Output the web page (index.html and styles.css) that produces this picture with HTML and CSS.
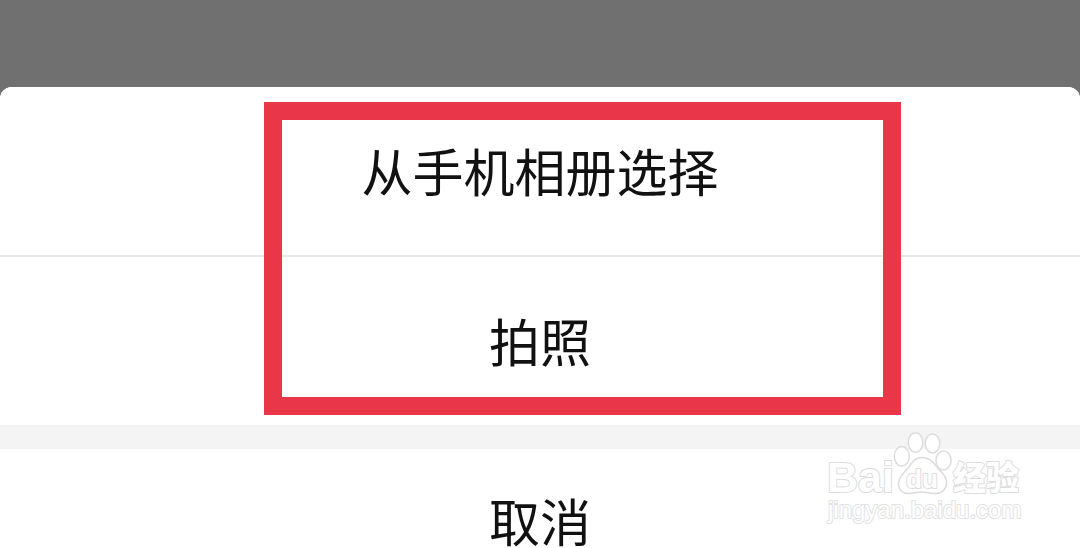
FILE: index.html
```html
<!DOCTYPE html>
<html lang="zh-CN">
<head>
<meta charset="utf-8">
<meta name="viewport" content="width=device-width, initial-scale=1">
<title>选择照片</title>
<link rel="stylesheet" href="styles.css">
</head>
<body>
<main class="screen">
  <div class="sheet" role="dialog" aria-label="选择照片">
    <div class="options">
      <button class="option" type="button">从手机相册选择</button>
      <button class="option" type="button">拍照</button>
      <div class="highlight"></div>
    </div>
    <button class="option cancel" type="button">取消</button>
  </div>
  <svg class="watermark" width="210" height="104" viewBox="820 428 210 104" aria-label="Baidu 经验">
    <g class="mark">
      <text class="brand" x="827" y="492">Bai</text>
      <ellipse cx="915.5" cy="442.5" rx="7.3" ry="9.8"/>
      <ellipse cx="932.5" cy="443.5" rx="7.3" ry="9.5"/>
      <ellipse cx="901.8" cy="456.3" rx="7.5" ry="9.8"/>
      <ellipse cx="943.5" cy="460.5" rx="7.5" ry="9.5"/>
      <path d="M922 457.500C915 457.500 912 462 909 467C905 472 899 476 898.500 483C898 490 903 494 909 493.500C914 493 918 492 922 492C927 492 931 494 936 493.500C943 493 947 488 946.500 481C946 475 941 472 937 467C933 461 929 457.500 922 457.500Z"/>
      <text class="du" x="906" y="488">du</text>
      <text class="product" x="953" y="490">经验</text>
      <text class="site" x="828" y="518">jingyan.baidu.com</text>
    </g>
  </svg>
</main>
</body>
</html>
```
FILE: styles.css
```css
* {
  box-sizing: border-box;
}

body {
  margin: 0;
  background: #707070;
  font-family: "Noto Sans CJK SC", sans-serif;
}

.screen {
  position: relative;
  height: 100vh;
  padding-top: 87px;
  overflow: hidden;
}

.sheet {
  overflow: hidden;
  border-radius: 12px 12px 0 0;
  background: #f4f4f4;
}

.options {
  position: relative;
  display: flex;
  flex-direction: column;
  gap: 2px;
  background: #e9e9e9;
}

.option {
  display: block;
  width: 100%;
  padding: 47px 16px 49px;
  border: 0;
  background: #fff;
  color: #111;
  font-family: inherit;
  font-size: 51px;
  line-height: 72px;
  text-align: center;
}

.cancel {
  margin-top: 24px;
  padding: 35px 16px;
}

.highlight {
  position: absolute;
  top: 15px;
  right: 179px;
  bottom: 10px;
  left: 264px;
  border: 18px solid #e93649;
  pointer-events: none;
}

.watermark {
  position: absolute;
  right: 50px;
  bottom: 16px;
}

.mark {
  fill: #fff;
  stroke: #dcdcdc;
  stroke-width: 1.5px;
  stroke-linejoin: round;
}

.brand,
.du,
.site {
  font-family: "Liberation Sans", Arial, sans-serif;
}

.brand {
  font-size: 43px;
  font-weight: 700;
  stroke-width: 2px;
  paint-order: stroke;
}

.du {
  font-size: 26px;
  font-weight: 700;
  stroke-width: 2px;
  paint-order: stroke;
}

.product {
  font-size: 33px;
  font-weight: 900;
  stroke-width: 2px;
  paint-order: stroke;
}

.site {
  font-size: 24px;
  stroke: #e2e2e2;
  stroke-width: 2px;
  paint-order: stroke;
}
```
